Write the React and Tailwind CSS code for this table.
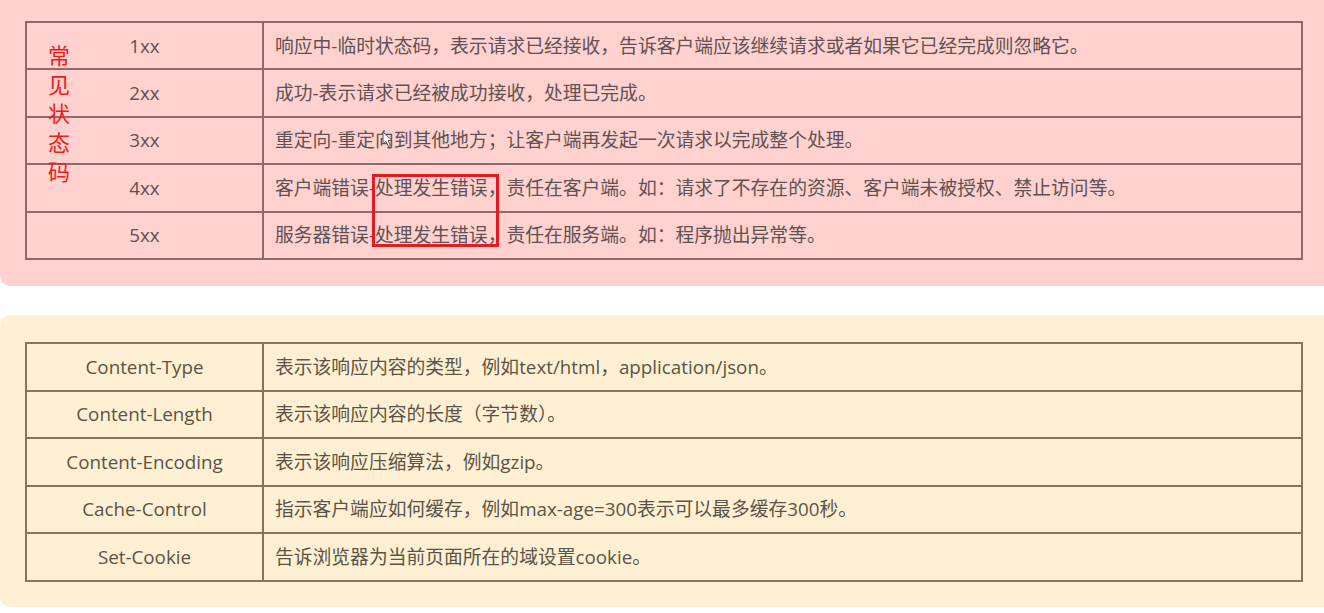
import React from "react";

const statusRows = [
  ["1xx", "响应中-临时状态码，表示请求已经接收，告诉客户端应该继续请求或者如果它已经完成则忽略它。"],
  ["2xx", "成功-表示请求已经被成功接收，处理已完成。"],
  ["3xx", "重定向-重定向到其他地方；让客户端再发起一次请求以完成整个处理。"],
  ["4xx", "客户端错误-处理发生错误，责任在客户端。如：请求了不存在的资源、客户端未被授权、禁止访问等。"],
  ["5xx", "服务器错误-处理发生错误，责任在服务端。如：程序抛出异常等。"],
];

const headerRows = [
  ["Content-Type", "表示该响应内容的类型，例如text/html，application/json。"],
  ["Content-Length", "表示该响应内容的长度（字节数）。"],
  ["Content-Encoding", "表示该响应压缩算法，例如gzip。"],
  ["Cache-Control", "指示客户端应如何缓存，例如max-age=300表示可以最多缓存300秒。"],
  ["Set-Cookie", "告诉浏览器为当前页面所在的域设置cookie。"],
];

const font = { fontFamily: "'Open Sans', 'Noto Sans CJK SC', sans-serif" };

export default function App() {
  return (
    <div className="w-[1324px] h-[613px] bg-white overflow-hidden" style={font}>
      {/* Pink panel */}
      <div className="relative bg-[#ffd1cf] rounded-bl-[10px] pt-[21px] pb-[27px] pl-[25px] pr-[21px] h-[286px]">
        <table className="w-[1278px] border-collapse border-2 border-[#8e6b6a] text-[18.8px] text-[#5e5252]">
          <tbody>
            {statusRows.map(([code, desc]) => (
              <tr key={code} className="h-[47.4px]">
                <td className="w-[237px] border-2 border-[#8e6b6a] text-center">{code}</td>
                <td className="border-2 border-[#8e6b6a] pl-[11px] whitespace-nowrap">{desc}</td>
              </tr>
            ))}
          </tbody>
        </table>
        {/* red vertical annotation */}
        <div className="absolute left-[48px] top-[40px] w-[22px] flex flex-col text-[22px] leading-[29px] text-[#f01c1c]" style={{ fontFamily: "'Noto Sans CJK SC', sans-serif" }}>
          <span>常</span>
          <span>见</span>
          <span>状</span>
          <span>态</span>
          <span>码</span>
        </div>
        {/* red box annotation */}
        <div className="absolute left-[372px] top-[174px] w-[127px] h-[73px] border-[3px] border-[#e31c23]" />
        {/* mouse cursor */}
        <svg className="absolute left-[382px] top-[131px]" width="12" height="17" viewBox="0 0 12 17">
          <path d="M1 1 L1 13 L4 10.5 L6.5 15.5 L8.5 14.5 L6 9.5 L10 9.5 Z" fill="#ffffff" stroke="#555" strokeWidth="1" strokeLinejoin="round" />
        </svg>
      </div>

      {/* Yellow panel */}
      <div className="mt-[29px] bg-[#fff0d3] rounded-l-[10px] pt-[27px] pb-[27px] pl-[25px] pr-[21px] h-[292px]">
        <table className="w-[1278px] border-collapse border-2 border-[#857560] text-[18.8px] text-[#5a5446]">
          <tbody>
            {headerRows.map(([name, desc]) => (
              <tr key={name} className="h-[47.6px]">
                <td className="w-[237px] border-2 border-[#857560] text-center">{name}</td>
                <td className="border-2 border-[#857560] pl-[11px] whitespace-nowrap">{desc}</td>
              </tr>
            ))}
          </tbody>
        </table>
      </div>
    </div>
  );
}
